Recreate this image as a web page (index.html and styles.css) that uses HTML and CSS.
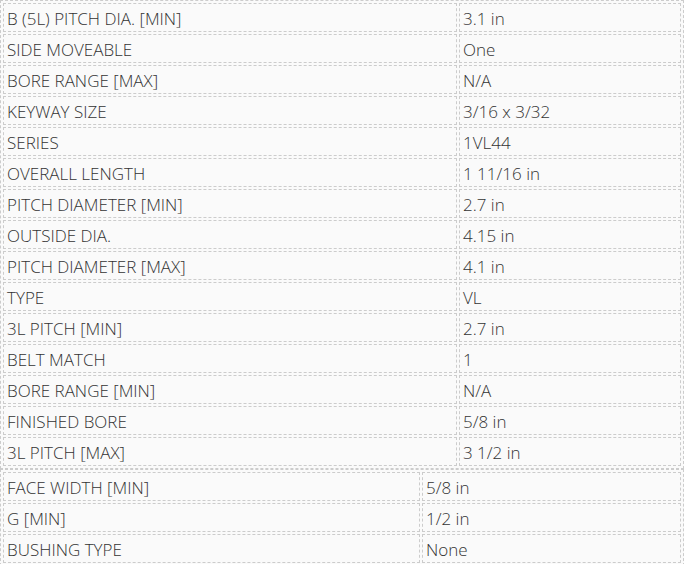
FILE: index.html
```html
<!DOCTYPE html>
<html>
<head>
<meta charset="utf-8">
<link rel="stylesheet" href="styles.css">
</head>
<body>
<table class="spec spec-a">
<tbody>
<tr><td class="label">B (5L) PITCH DIA. [MIN]</td><td class="value">3.1 in</td></tr>
<tr><td class="label">SIDE MOVEABLE</td><td class="value">One</td></tr>
<tr><td class="label">BORE RANGE [MAX]</td><td class="value">N/A</td></tr>
<tr><td class="label">KEYWAY SIZE</td><td class="value">3/16 x 3/32</td></tr>
<tr><td class="label">SERIES</td><td class="value">1VL44</td></tr>
<tr><td class="label">OVERALL LENGTH</td><td class="value">1 11/16 in</td></tr>
<tr><td class="label">PITCH DIAMETER [MIN]</td><td class="value">2.7 in</td></tr>
<tr><td class="label">OUTSIDE DIA.</td><td class="value">4.15 in</td></tr>
<tr><td class="label">PITCH DIAMETER [MAX]</td><td class="value">4.1 in</td></tr>
<tr><td class="label">TYPE</td><td class="value">VL</td></tr>
<tr><td class="label">3L PITCH [MIN]</td><td class="value">2.7 in</td></tr>
<tr><td class="label">BELT MATCH</td><td class="value">1</td></tr>
<tr><td class="label">BORE RANGE [MIN]</td><td class="value">N/A</td></tr>
<tr><td class="label">FINISHED BORE</td><td class="value">5/8 in</td></tr>
<tr><td class="label">3L PITCH [MAX]</td><td class="value">3 1/2 in</td></tr>
</tbody>
</table>
<table class="spec spec-b">
<tbody>
<tr><td class="label">FACE WIDTH [MIN]</td><td class="value">5/8 in</td></tr>
<tr><td class="label">G [MIN]</td><td class="value">1/2 in</td></tr>
<tr><td class="label">BUSHING TYPE</td><td class="value">None</td></tr>
</tbody>
</table>
</body>
</html>
```
FILE: styles.css
```css
html, body {
  margin: 0;
  padding: 0;
  background: #ffffff;
}
body {
  font-family: "Open Sans", "Noto Sans", sans-serif;
  font-size: 17px;
  font-weight: 300;
  color: #333333;
}
.spec {
  width: 684px;
  margin: 0;
  border: 1px dashed #cccccc;
  border-spacing: 2px;
  background: #fafafa;
}
.spec td {
  border: 1px dashed #cccccc;
  padding: 4px 3px 2px;
  line-height: 21px;
  white-space: nowrap;
}
.spec-a .label { width: 446px; }
.spec-b .label { width: 409px; }
```
